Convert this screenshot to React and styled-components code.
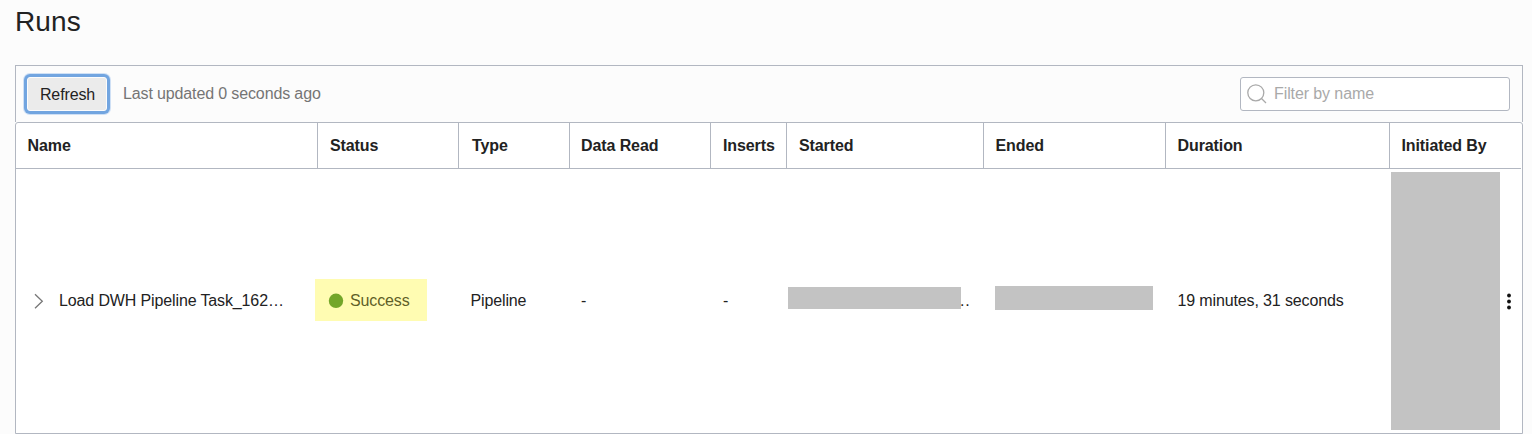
import React from "react";
import styled, { createGlobalStyle } from "styled-components";

const line = "#b2b7c1";
const columns = "302px 141px 111px 141px 76px 197px 182px 224px 1fr";

const GlobalStyle = createGlobalStyle`
  * { box-sizing: border-box; }
  body {
    margin: 0;
    background: #fcfcfc;
    color: #222;
    font: 16px/20px "Liberation Sans", Arial, sans-serif;
    letter-spacing: -0.13px;
    overflow: hidden;
  }
`;

const Page = styled.main`
  height: 434px;
  padding: 6px 9px 0 15px;
`;

const Title = styled.h1`
  margin: 0 0 27px;
  font-size: 28px;
  font-weight: 400;
  line-height: 32px;
  letter-spacing: 0.1px;
`;

const Toolbar = styled.div`
  display: flex;
  align-items: flex-start;
  height: 57px;
  padding: 11px 12px 0 11px;
  border: 1px solid ${line};
  border-bottom: 0;
`;

const RefreshButton = styled.button`
  width: 80px;
  height: 34px;
  margin: 0;
  padding: 1px 0 0 1px;
  border: 1px solid #fcfcfc;
  border-radius: 3px;
  background: #ebebeb;
  box-shadow: 0 0 0 3px #72a5e0, 0 0 0 4px #cfe0f5;
  color: #222;
  font: inherit;
  letter-spacing: -0.13px;
`;

const Updated = styled.span`
  margin: 7px auto 0 16px;
  color: #757575;
`;

const Filter = styled.label`
  display: flex;
  align-items: center;
  width: 270px;
  height: 34px;
  padding-left: 6px;
  border: 1px solid ${line};
  border-radius: 3px;
  background: #fff;
`;

const FilterInput = styled.input`
  flex: 1;
  min-width: 0;
  height: 20px;
  margin: 0 0 1px 7px;
  padding: 0;
  border: 0;
  outline: 0;
  background: none;
  font: inherit;
  letter-spacing: -0.1px;
  &::placeholder { color: #a9a9a9; opacity: 1; }
`;

const Table = styled.section`
  height: 312px;
  border: 1px solid ${line};
  border-radius: 3px 3px 0 0;
  background: #fff;
`;

const HeaderRow = styled.div`
  display: grid;
  grid-template-columns: ${columns};
  height: 46px;
  margin-right: 1px;
  border-bottom: 1px solid ${line};
  letter-spacing: -0.1px;
`;

const HeaderCell = styled.div`
  padding: 13px 0 0 ${(p) => p.$inset || 12}px;
  border-right: 1px solid ${line};
  font-weight: 700;
  white-space: nowrap;
  &:last-child { border-right: 0; }
`;

const Row = styled.div`
  display: grid;
  grid-template-columns: ${columns};
  height: 264px;
`;

const Cell = styled.div`
  display: flex;
  align-items: center;
  min-width: 0;
  padding: 0 0 ${(p) => p.$lift ?? 0}px ${(p) => p.$inset ?? 12}px;
  white-space: nowrap;
`;

const Chevron = styled.svg`
  flex: none;
  margin: 0 15px 0 0;
`;

const Highlight = styled.div`
  display: flex;
  align-items: center;
  width: 112px;
  height: 42px;
  margin-left: -3px;
  padding: 2px 0 0 13px;
  background: #fffcb2;
  color: #5f5f28;
`;

const StatusDot = styled.svg`
  flex: none;
  margin: 0 6px 0 0;
`;

const Redaction = styled.span`
  flex: none;
  width: ${(p) => p.$w}px;
  height: ${(p) => p.$h}px;
  background: #c3c3c3;
`;

const Trail = styled.span`
  margin: 6px 0 0 -1px;
  letter-spacing: 0.7px;
`;

const MenuDots = styled.svg`
  margin-left: 6px;
`;

const headers = [
  ["Name", 11.5], ["Status"], ["Type", 13], ["Data Read", 11], ["Inserts"],
  ["Started"], ["Ended", 11.5], ["Duration", 11.5], ["Initiated By", 11.5],
];

export default function App() {
  return (
    <Page>
      <GlobalStyle />
      <Title>Runs</Title>
      <Toolbar>
        <RefreshButton>Refresh</RefreshButton>
        <Updated>Last updated 0 seconds ago</Updated>
        <Filter>
          <svg width="20" height="20" viewBox="0 0 20 20" fill="none" stroke="#a9a9a9" strokeWidth="1.3">
            <circle cx="8.8" cy="8.8" r="8" />
            <path d="M14.5 14.5 19 19" />
          </svg>
          <FilterInput placeholder="Filter by name" />
        </Filter>
      </Toolbar>
      <Table>
        <HeaderRow>
          {headers.map(([label, inset]) => (
            <HeaderCell key={label} $inset={inset}>{label}</HeaderCell>
          ))}
        </HeaderRow>
        <Row>
          <Cell $inset={18}>
            <Chevron width="10" height="16" viewBox="0 0 10 16" fill="none" stroke="#777" strokeWidth="1.3">
              <path d="M1 1.3 8.3 8.3 1 15.3" />
            </Chevron>
            Load DWH Pipeline Task_162…
          </Cell>
          <Cell $inset={0} $lift={2}>
            <Highlight>
              <StatusDot width="16" height="16" viewBox="0 0 16 16" fill="#73a629">
                <circle cx="8" cy="7.8" r="7.2" />
              </StatusDot>
              Success
            </Highlight>
          </Cell>
          <Cell $inset={11.5}>Pipeline</Cell>
          <Cell $inset={11}>-</Cell>
          <Cell>-</Cell>
          <Cell $inset={1} $lift={6}>
            <Redaction $w={173} $h={22} />
            <Trail>..</Trail>
          </Cell>
          <Cell $inset={11} $lift={6}><Redaction $w={158} $h={24} /></Cell>
          <Cell $inset={11.5}>19 minutes, 31 seconds</Cell>
          <Cell $inset={1}>
            <Redaction $w={109} $h={258} />
            <MenuDots width="6" height="18" viewBox="0 0 6 18" fill="#111">
              <circle cx="3" cy="3.5" r="1.9" />
              <circle cx="3" cy="9.5" r="1.9" />
              <circle cx="3" cy="15.5" r="1.9" />
            </MenuDots>
          </Cell>
        </Row>
      </Table>
    </Page>
  );
}
